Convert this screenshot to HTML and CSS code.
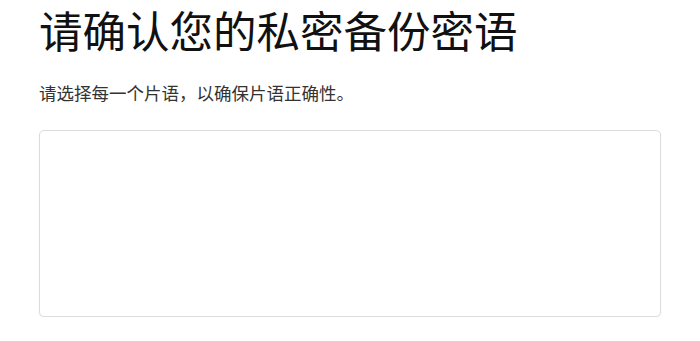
FILE: index.html
```html
<!DOCTYPE html>
<html lang="zh-CN">
<head>
<meta charset="utf-8">
<title>请确认您的私密备份密语</title>
<link rel="stylesheet" href="styles.css">
</head>
<body>
<main class="page">
  <h1 class="title">请确认您的私密备份密语</h1>
  <p class="subtitle">请选择每一个片语，以确保片语正确性。</p>
  <div class="phrase-box"></div>
</main>
</body>
</html>
```
FILE: styles.css
```css
html, body {
  margin: 0;
  padding: 0;
  background: #ffffff;
}
body {
  font-family: "Noto Sans CJK SC", "Noto Sans", sans-serif;
}
.page {
  padding: 0 39px 0 39px;
  display: flex;
  flex-direction: column;
}
.title {
  margin: 0;
  font-size: 43.5px;
  line-height: 60px;
  font-weight: 400;
  color: #111111;
}
.subtitle {
  margin: 21px 0 0 0;
  font-size: 17.5px;
  line-height: 24px;
  color: #333333;
}
.phrase-box {
  margin-top: 25px;
  height: 187px;
  box-sizing: border-box;
  border: 1px solid #dcdcdc;
  border-radius: 5px;
  box-shadow: 0 1px 2px rgba(0,0,0,0.06);
  background: #ffffff;
}
```
